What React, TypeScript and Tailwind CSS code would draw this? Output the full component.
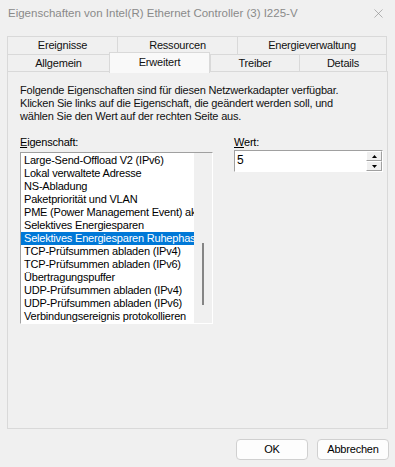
import { X } from 'lucide-react'

const ITEMS = [
  'Large-Send-Offload V2 (IPv6)',
  'Lokal verwaltete Adresse',
  'NS-Abladung',
  'Paketpriorität und VLAN',
  'PME (Power Management Event) aktivieren',
  'Selektives Energiesparen',
  'Selektives Energiesparen Ruhephase',
  'TCP-Prüfsummen abladen (IPv4)',
  'TCP-Prüfsummen abladen (IPv6)',
  'Übertragungspuffer',
  'UDP-Prüfsummen abladen (IPv4)',
  'UDP-Prüfsummen abladen (IPv6)',
  'Verbindungsereignis protokollieren',
]

const SELECTED = 6

function Tab({ label, w, last }: { label: string; w: string; last?: boolean }) {
  return (
    <div className={`${w} h-full flex items-center justify-center border-t border-l ${last ? 'border-r' : ''} border-[#d9d9d9] text-[#111]`}>
      {label}
    </div>
  )
}

function SpinArrow({ up }: { up?: boolean }) {
  return (
    <div className="flex-1 flex items-center justify-center bg-[#f0f0f0] border border-t-white border-l-white border-r-[#a0a0a0] border-b-[#a0a0a0]">
      <svg width="5" height="3" viewBox="0 0 5 3">
        {up ? <polygon points="2.5,0 5,3 0,3" fill="#000" /> : <polygon points="0,0 5,0 2.5,3" fill="#000" />}
      </svg>
    </div>
  )
}

export default function App() {
  return (
    <div
      className="w-[395px] h-[467px] bg-[#f0f0f0] flex flex-col text-[11px] leading-[13px] tracking-[-0.2px] text-black overflow-hidden"
      style={{ fontFamily: '"Liberation Sans", Arial, sans-serif' }}
    >
      {/* title bar */}
      <div className="h-[27px] flex items-center justify-between pl-[8px] pr-[9px]">
        <span className="text-[#8a8a8a] text-[11.5px] tracking-normal">Eigenschaften von Intel(R) Ethernet Controller (3) I225-V</span>
        <X size={15} strokeWidth={1} color="#8a8a8a" />
      </div>

      {/* tabs */}
      <div className="mt-[9px] ml-[7px] flex flex-col">
        <div className="flex h-[18px]">
          <Tab label="Ereignisse" w="w-[110px]" />
          <Tab label="Ressourcen" w="w-[120px]" />
          <Tab label="Energieverwaltung" w="w-[150px]" last />
        </div>
        <div className="flex h-[18px] border-b border-[#d9d9d9] w-[381px]">
          <Tab label="Allgemein" w="w-[102px]" />
          <div className="w-[101px] h-[21px] -mt-[2px] relative z-10 flex items-start pt-[3px] justify-center bg-[#f9f9f9] border border-b-0 border-[#d9d9d9] text-[#111]">
            Erweitert
          </div>
          <Tab label="Treiber" w="w-[89px]" />
          <Tab label="Details" w="w-[88px]" last />
        </div>
      </div>

      {/* panel */}
      <div className="ml-[7px] w-[381px] h-[357px] border border-t-0 border-[#d9d9d9] bg-[#f0f0f0] pl-[12px] pt-[12px] flex flex-col">
        <p className="text-[#111] w-[360px]">
          Folgende Eigenschaften sind für diesen Netzwerkadapter verfügbar.
          <br />
          Klicken Sie links auf die Eigenschaft, die geändert werden soll, und
          <br />
          wählen Sie den Wert auf der rechten Seite aus.
        </p>

        <div className="flex mt-[13px]">
          <div className="flex flex-col w-[193px]">
            <span className="mb-[3px]">
              <span className="underline">E</span>igenschaft:
            </span>
            <div className="h-[172px] flex border border-t-[#a0a0a0] border-l-[#a0a0a0] border-r-white border-b-white">
              <div className="w-[173px] bg-white pt-[1px] overflow-hidden">
                {ITEMS.map((item, i) => (
                  <div
                    key={item}
                    className={`h-[13px] pl-[3px] whitespace-nowrap overflow-hidden ${i === SELECTED ? 'bg-[#0078d7] text-white' : 'text-black'}`}
                  >
                    {item}
                  </div>
                ))}
              </div>
              <div className="flex-1 bg-[#f0f0f0] flex justify-center pt-[90px]">
                <div className="w-[2px] h-[62px] bg-[#858585]" />
              </div>
            </div>
          </div>

          <div className="flex flex-col ml-[21px]">
            <span className="mb-[1px]">
              <span className="underline">W</span>ert:
            </span>
            <div className="w-[149px] h-[22px] flex bg-white border border-t-[#a0a0a0] border-l-[#a0a0a0] border-r-white border-b-white">
              <span className="flex-1 pl-[2px] pt-[3px] text-[12px]">5</span>
              <div className="w-[16px] flex flex-col">
                <SpinArrow up />
                <SpinArrow />
              </div>
            </div>
          </div>
        </div>
      </div>

      {/* buttons */}
      <div className="flex justify-end gap-[9px] pr-[6px] mt-[10px]">
        <button className="w-[72px] h-[21px] bg-[#fdfdfd] border border-[#d0d0d0] rounded-[4px] text-black">OK</button>
        <button className="w-[72px] h-[21px] bg-[#fdfdfd] border border-[#d0d0d0] rounded-[4px] text-black">Abbrechen</button>
      </div>
    </div>
  )
}
